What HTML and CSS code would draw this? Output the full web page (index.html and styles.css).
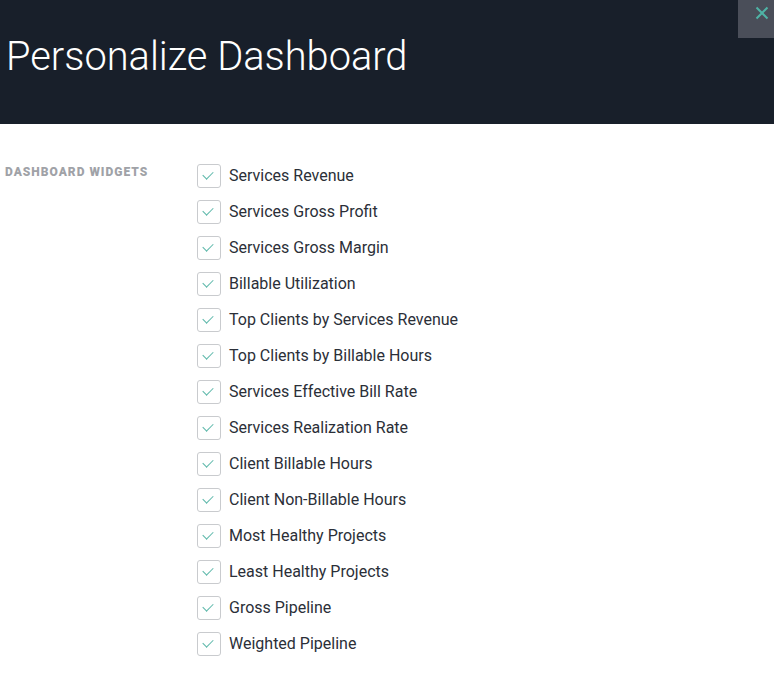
FILE: index.html
```html
<!DOCTYPE html>
<html lang="en">
  <head>
    <meta charset="UTF-8" />
    <meta name="viewport" content="width=device-width, initial-scale=1.0" />
    <title>Personalize Dashboard</title>
    <link rel="stylesheet" href="styles.css">
  </head>
  <body>
    <div class="modal-header">
      <h1>Personalize Dashboard</h1>
      <button class="close-btn" aria-label="Close">
        <svg width="14" height="14" viewBox="0 0 14 14">
          <path d="M1.5 1.5 L12.5 12.5 M12.5 1.5 L1.5 12.5" stroke="#4fb3a5" stroke-width="2" fill="none" />
        </svg>
      </button>
    </div>
    <div class="modal-body">
      <div class="section-label">Dashboard Widgets</div>
      <ul class="widget-list">
        <li><span class="check"></span>Services Revenue</li>
        <li><span class="check"></span>Services Gross Profit</li>
        <li><span class="check"></span>Services Gross Margin</li>
        <li><span class="check"></span>Billable Utilization</li>
        <li><span class="check"></span>Top Clients by Services Revenue</li>
        <li><span class="check"></span>Top Clients by Billable Hours</li>
        <li><span class="check"></span>Services Effective Bill Rate</li>
        <li><span class="check"></span>Services Realization Rate</li>
        <li><span class="check"></span>Client Billable Hours</li>
        <li><span class="check"></span>Client Non-Billable Hours</li>
        <li><span class="check"></span>Most Healthy Projects</li>
        <li><span class="check"></span>Least Healthy Projects</li>
        <li><span class="check"></span>Gross Pipeline</li>
        <li><span class="check"></span>Weighted Pipeline</li>
      </ul>
    </div>
  </body>
</html>
```

FILE: styles.css
```css
body {
  margin: 0;
  font-family: Roboto, "Liberation Sans", sans-serif;
  background-color: #ffffff;
}

.modal-header {
  position: relative;
  height: 124px;
  background-color: #181f2a;
  display: flex;
  align-items: center;
  padding: 0 6px;
}

.modal-header h1 {
  margin: 0 0 12px 0;
  color: #ffffff;
  font-weight: 300;
  font-size: 39.8px;
}

.close-btn {
  position: absolute;
  top: 0;
  right: 0;
  width: 36px;
  height: 38px;
  border: none;
  padding: 0;
  background-color: #4a4e59;
  display: flex;
  justify-content: flex-end;
  align-items: flex-start;
  cursor: pointer;
}

.close-btn svg {
  margin: 6px 5px 0 0;
}

.modal-body {
  display: flex;
  padding: 40px 5px;
}

.section-label {
  width: 192px;
  padding-top: 1px;
  color: #a0a2a7;
  font-size: 12px;
  font-weight: 900;
  letter-spacing: 1px;
  text-transform: uppercase;
}

.widget-list {
  list-style: none;
  margin: 0;
  padding: 0;
  display: flex;
  flex-direction: column;
  gap: 12px;
}

.widget-list li {
  display: flex;
  align-items: flex-start;
  height: 24px;
  line-height: 23px;
  color: #2b2f38;
  font-size: 16px;
}

.check {
  position: relative;
  width: 22px;
  height: 22px;
  margin-right: 8px;
  border: 1px solid #c9cbce;
  border-radius: 3px;
}

.check::after {
  content: "";
  position: absolute;
  left: 7px;
  top: 4px;
  width: 5px;
  height: 9px;
  border: solid #5db8aa;
  border-width: 0 1.5px 1.5px 0;
  transform: rotate(45deg);
}
```
